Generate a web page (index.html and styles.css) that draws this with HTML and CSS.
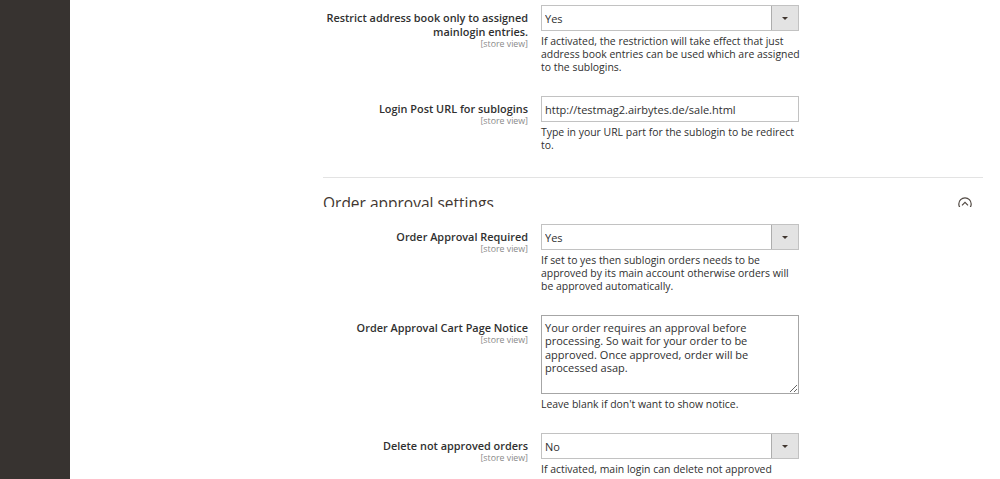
FILE: index.html
```html
<!DOCTYPE html>
<html lang="en">
  <head>
    <meta charset="UTF-8" />
    <meta name="viewport" content="width=device-width, initial-scale=1.0" />
    <title>Configuration - Sublogin</title>
    <link rel="stylesheet" href="styles.css">
  </head>
  <body>
    <div class="admin-menu"></div>

    <div class="page-content">
      <div class="config-section">
        <fieldset class="config-fieldset config-fieldset-first">
          <div class="field">
            <label class="field-label" for="restrictAddress">
              <span>Restrict address book only to assigned mainlogin entries.</span>
              <span class="scope">[store view]</span>
            </label>
            <div class="field-control">
              <div class="select-wrap">
                <select id="restrictAddress" name="restrictAddress">
                  <option selected>Yes</option>
                  <option>No</option>
                </select>
              </div>
              <p class="note">If activated, the restriction will take effect that just address book entries can be used which are assigned to the sublogins.</p>
            </div>
          </div>

          <div class="field">
            <label class="field-label" for="loginPostUrl">
              <span>Login Post URL for sublogins</span>
              <span class="scope">[store view]</span>
            </label>
            <div class="field-control">
              <input type="text" class="input-text" id="loginPostUrl" name="loginPostUrl" value="http://testmag2.airbytes.de/sale.html" />
              <p class="note">Type in your URL part for the sublogin to be redirect to.</p>
            </div>
          </div>
        </fieldset>

        <div class="section-title">
          <span>Order approval settings</span>
          <svg class="collapse-icon" width="14" height="14" viewBox="0 0 14 14">
            <circle cx="7" cy="7" r="6.2" fill="none" stroke="#514943" stroke-width="1.2" />
            <polyline points="4,8.4 7,5.4 10,8.4" fill="none" stroke="#514943" stroke-width="1.2" />
          </svg>
        </div>

        <fieldset class="config-fieldset">
          <div class="field">
            <label class="field-label" for="approvalRequired">
              <span>Order Approval Required</span>
              <span class="scope">[store view]</span>
            </label>
            <div class="field-control">
              <div class="select-wrap">
                <select id="approvalRequired" name="approvalRequired">
                  <option selected>Yes</option>
                  <option>No</option>
                </select>
              </div>
              <p class="note">If set to yes then sublogin orders needs to be approved by its main account otherwise orders will be approved automatically.</p>
            </div>
          </div>

          <div class="field">
            <label class="field-label" for="approvalNotice">
              <span>Order Approval Cart Page Notice</span>
              <span class="scope">[store view]</span>
            </label>
            <div class="field-control">
              <textarea id="approvalNotice" name="approvalNotice">Your order requires an approval before processing. So wait for your order to be approved. Once approved, order will be processed asap.</textarea>
              <p class="note">Leave blank if don't want to show notice.</p>
            </div>
          </div>

          <div class="field">
            <label class="field-label" for="deleteNotApproved">
              <span>Delete not approved orders</span>
              <span class="scope">[store view]</span>
            </label>
            <div class="field-control">
              <div class="select-wrap">
                <select id="deleteNotApproved" name="deleteNotApproved">
                  <option>Yes</option>
                  <option selected>No</option>
                </select>
              </div>
              <p class="note">If activated, main login can delete not approved</p>
            </div>
          </div>
        </fieldset>
      </div>
    </div>
  </body>
</html>
```

FILE: styles.css
```css
body {
  font-family: "Open Sans", sans-serif;
  margin: 0;
  height: 100vh;
  overflow: hidden;
  display: flex;
  color: #303030;
  background-color: #ffffff;
}

.admin-menu {
  flex: 0 0 70px;
  background-color: #373330;
}

.page-content {
  flex: 1;
  padding-left: 253px;
}

.config-section {
  width: 660px;
}

.config-fieldset {
  display: flex;
  flex-direction: column;
  gap: 22px;
  border: 0;
  margin: 0;
  padding: 17px 0 0;
  min-width: 0;
}

.config-fieldset-first {
  padding: 5px 0 25px;
}

.section-title {
  display: flex;
  justify-content: space-between;
  align-items: flex-start;
  height: 14px;
  padding-top: 15px;
  overflow: hidden;
  border-top: 1px solid #e3e3e3;
  font-size: 15.5px;
  line-height: 20px;
  color: #41362f;
}

.collapse-icon {
  flex-shrink: 0;
  margin-top: 4px;
  margin-right: 11px;
}

.field {
  display: flex;
}

.field-label {
  flex: 0 0 205px;
  margin-right: 13px;
  padding-top: 6px;
  text-align: right;
  font-size: 10.9px;
  font-weight: 600;
  line-height: 14px;
}

.field-label span {
  display: block;
}

.field-label .scope {
  font-size: 8.8px;
  font-weight: 400;
  line-height: 10px;
  color: #8a8a8a;
}

.field-control {
  flex: 0 0 258px;
}

.select-wrap {
  position: relative;
}

.select-wrap::before {
  content: "";
  position: absolute;
  top: 1px;
  right: 1px;
  bottom: 1px;
  width: 26px;
  border-left: 1px solid #adadad;
  background-color: #e3e3e3;
  pointer-events: none;
}

.select-wrap::after {
  content: "";
  position: absolute;
  top: 12px;
  right: 11px;
  border-left: 3px solid transparent;
  border-right: 3px solid transparent;
  border-top: 3px solid #41362f;
  pointer-events: none;
}

select,
.input-text,
textarea {
  display: block;
  width: 100%;
  box-sizing: border-box;
  margin: 0;
  font-family: "Open Sans", sans-serif;
  font-size: 11px;
  color: #303030;
  background-color: #ffffff;
  border-radius: 0;
  outline: none;
}

select {
  appearance: none;
  height: 26px;
  padding: 0 30px 0 3px;
  border: 1px solid #c2c2c2;
}

.input-text {
  height: 26px;
  padding: 0 3px;
  border: 1px solid #c2c2c2;
}

textarea {
  height: 79px;
  padding: 5px 3px;
  line-height: 13.3px;
  border: 1px solid #a6a6a6;
  resize: vertical;
}

.note {
  margin: 4px -2px 0 0;
  font-size: 10.45px;
  line-height: 13px;
}
```
